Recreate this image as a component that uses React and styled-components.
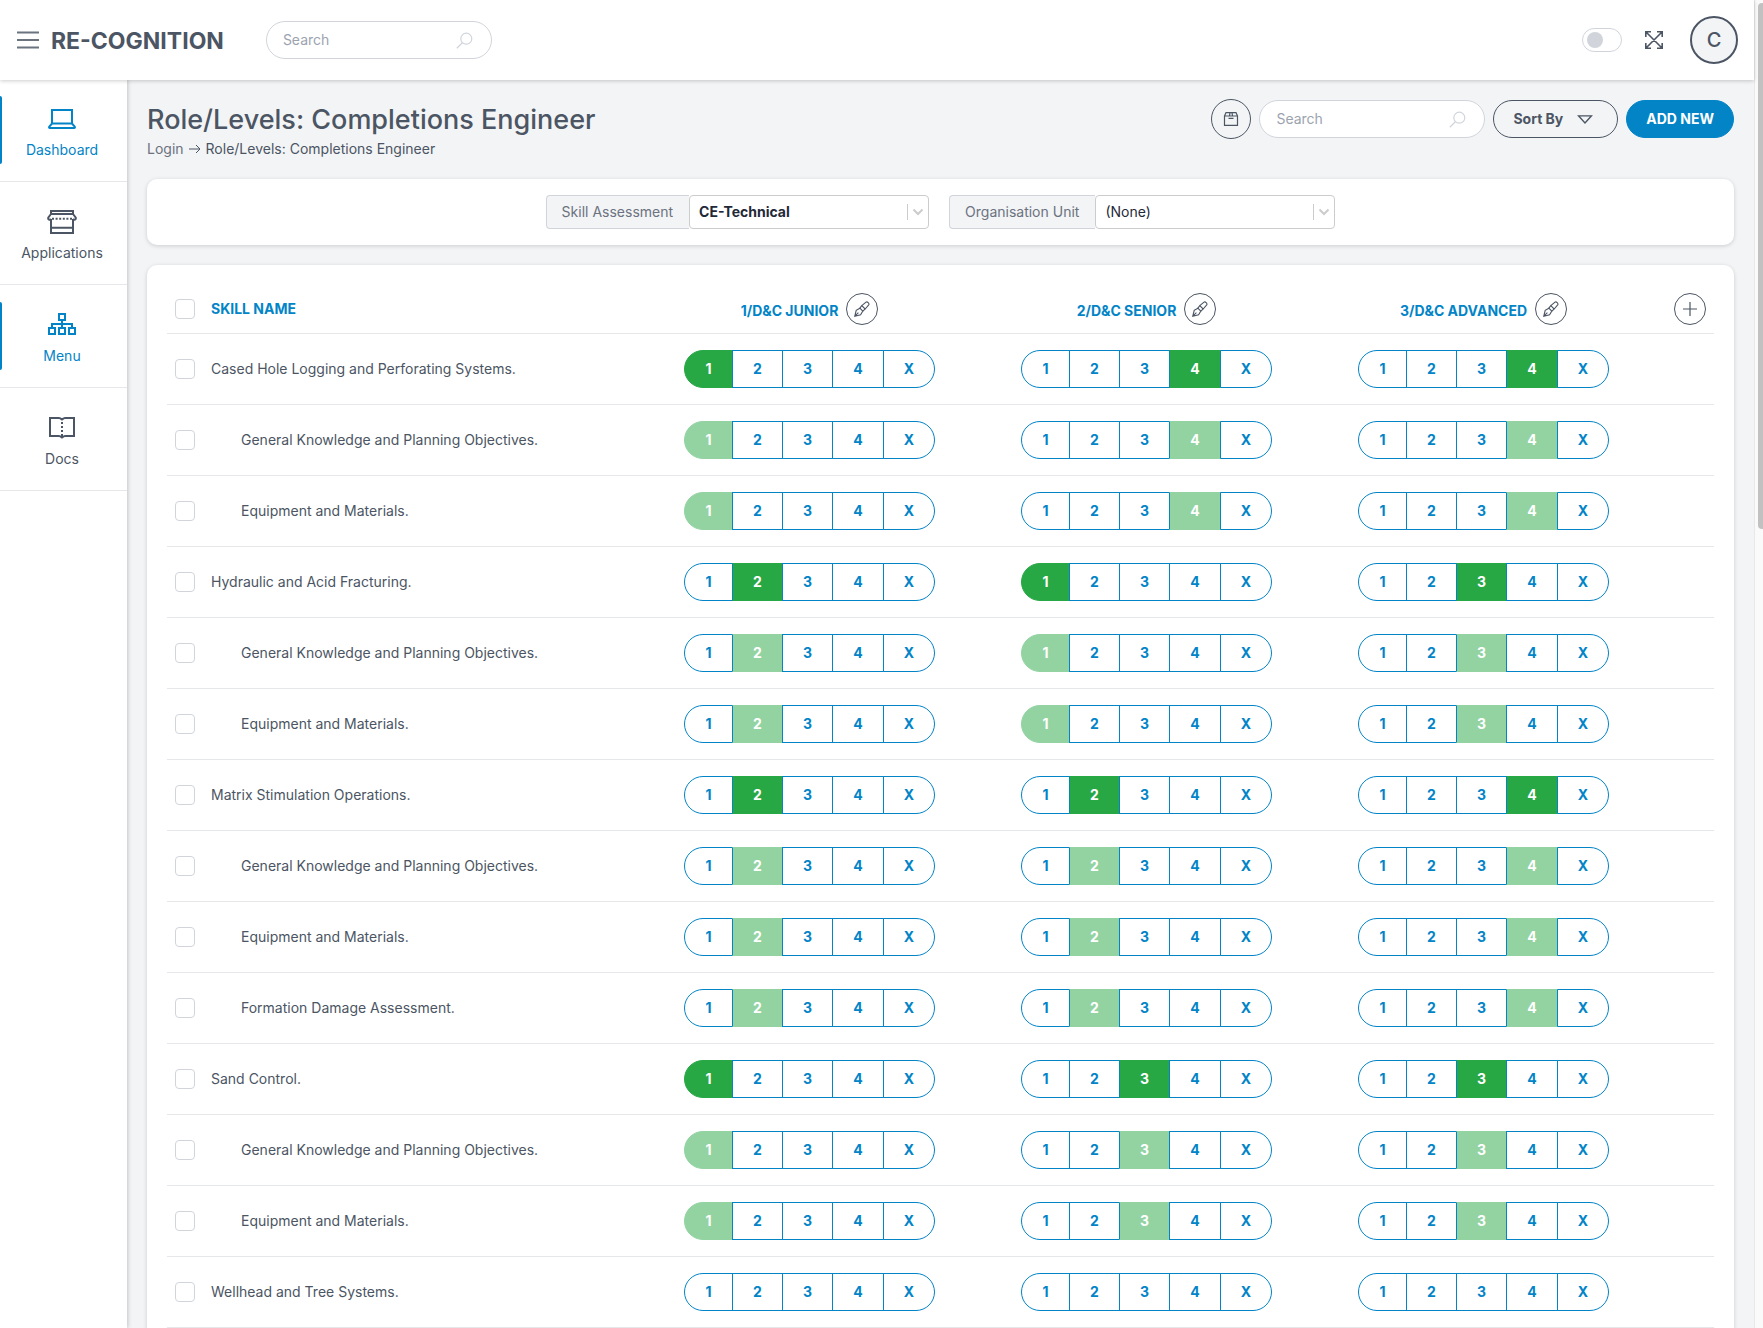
import React, { useState } from "react";
import styled, { createGlobalStyle, css } from "styled-components";

const color = {
  primary: "#0284c7",
  text: "#4b5563",
  muted: "#6b7280",
  line: "#e5e7eb",
  border: "#d1d5db",
  surface: "#f3f4f6",
  green: "#28a745",
  greenSoft: "#93d3a2",
};

const GlobalStyle = createGlobalStyle`
  *, *::before, *::after { box-sizing: border-box; }
  body {
    margin: 0;
    background: ${color.surface};
    color: ${color.text};
    font: 400 14px/20px Inter, "Liberation Sans", sans-serif;
  }
  button, input, select { font: inherit; color: inherit; margin: 0; }
  button { cursor: pointer; }
`;

const Shell = styled.div`
  display: flex;
  height: 100vh;
`;

const Frame = styled.div`
  flex: 1;
  min-width: 0;
  display: flex;
  flex-direction: column;
`;

const Rail = styled.div`
  flex: none;
  width: 9px;
  padding: 3px 0 0 3px;
  border-left: 1px solid #e8e8e8;
  background: #fafafa;
`;

const Thumb = styled.div`
  height: calc(40% - 4px);
  border-radius: 4px 0 0 4px;
  background: #c1c1c1;
`;

const TopBar = styled.header`
  flex: none;
  z-index: 2;
  display: flex;
  align-items: center;
  height: 80px;
  padding: 0 16px;
  background: #fff;
  box-shadow: 0 1px 4px rgba(0, 0, 0, 0.2);
`;

const PlainButton = styled.button`
  display: flex;
  padding: 0;
  border: 0;
  background: none;
  color: ${(p) => (p.$muted ? color.muted : color.text)};
`;

const Brand = styled.a`
  margin: 2px 42px 0 11px;
  color: ${color.text};
  font-size: 23px;
  line-height: 32px;
  font-weight: 700;
  text-decoration: none;
`;

const SearchBox = styled.label`
  display: flex;
  align-items: center;
  width: 226px;
  height: 38px;
  padding: 0 18px 0 16px;
  border: 1px solid ${color.border};
  border-radius: 19px;
  background: #fff;
  color: ${color.border};
`;

const SearchInput = styled.input`
  flex: 1;
  min-width: 0;
  padding: 0;
  border: 0;
  outline: 0;
  background: none;
  color: ${color.text};
  &::placeholder { color: #9ca3af; opacity: 1; }
`;

const TopActions = styled.div`
  display: flex;
  align-items: center;
  gap: 23px;
  margin-left: auto;
`;

const Toggle = styled.input`
  appearance: none;
  width: 40px;
  height: 24px;
  padding: 3px 4px;
  border: 1px solid ${color.border};
  border-radius: 12px;
  background: #fff;
  &::before {
    content: "";
    display: block;
    width: 16px;
    height: 16px;
    border-radius: 50%;
    background: ${color.border};
  }
  &:checked::before { margin-left: auto; background: ${color.primary}; }
`;

const Avatar = styled.button`
  width: 48px;
  height: 48px;
  margin-left: 4px;
  padding: 0;
  border: 2px solid ${color.text};
  border-radius: 50%;
  background: ${color.surface};
  font-size: 20px;
  font-weight: 500;
`;

const Body = styled.div`
  flex: 1;
  min-height: 0;
  display: flex;
`;

const Sidebar = styled.nav`
  flex: none;
  z-index: 1;
  width: 127px;
  margin-top: -1px;
  background: #fff;
  box-shadow: 1px 0 4px rgba(0, 0, 0, 0.2);
`;

const NavItem = styled.a`
  position: relative;
  display: flex;
  flex-direction: column;
  align-items: center;
  gap: 5px;
  height: 103px;
  padding: 24px 3px 0 0;
  border-bottom: 1px solid ${color.line};
  color: ${(p) => (p.$active ? color.primary : color.text)};
  text-decoration: none;
  ${(p) =>
    p.$active &&
    css`
      &::before {
        content: "";
        position: absolute;
        left: 0;
        top: 17px;
        width: 2px;
        height: 68px;
        border-radius: 0 4px 4px 0;
        background: ${color.primary};
      }
    `}
`;

const Main = styled.main`
  flex: 1;
  min-width: 0;
  padding: 19px 20px 0;
  overflow-y: auto;
  scrollbar-width: none;
`;

const PageHead = styled.div`
  display: flex;
  align-items: flex-start;
  justify-content: space-between;
  height: 80px;
`;

const Title = styled.h1`
  margin: 3px 0 1px;
  font-size: 27px;
  line-height: 36px;
  font-weight: 500;
`;

const Crumbs = styled.nav`
  display: flex;
  align-items: center;
  gap: 5px;
`;

const Crumb = styled.a`
  color: ${(p) => (p.$current ? color.text : color.muted)};
  text-decoration: none;
`;

const PageActions = styled.div`
  display: flex;
  align-items: center;
  gap: 8px;
`;

const RoundButton = styled.button`
  display: inline-flex;
  align-items: center;
  justify-content: center;
  width: ${(p) => p.$size}px;
  height: ${(p) => p.$size}px;
  padding: 0;
  border: 1px solid ${color.text};
  border-radius: 50%;
  background: none;
`;

const PillButton = styled.button`
  display: flex;
  align-items: center;
  gap: 14px;
  height: 38px;
  padding: ${(p) => (p.$primary ? "0 19px" : "0 24px 0 19px")};
  border: 1px solid ${(p) => (p.$primary ? color.primary : color.text)};
  border-radius: 19px;
  background: ${(p) => (p.$primary ? color.primary : "transparent")};
  color: ${(p) => (p.$primary ? "#fff" : color.text)};
  font-weight: 700;
`;

const Card = styled.section`
  border-radius: 10px;
  background: #fff;
  box-shadow: 0 1px 4px rgba(0, 0, 0, 0.16);
`;

const Filters = styled(Card)`
  display: flex;
  justify-content: center;
  gap: 20px;
  margin-bottom: 20px;
  padding: 16px;
`;

const Field = styled.div`
  display: flex;
  height: 34px;
`;

const FieldLabel = styled.label`
  display: flex;
  align-items: center;
  padding: 0 16px 0 15px;
  border: 1px solid ${color.border};
  border-right: 0;
  border-radius: 4px 0 0 4px;
  background: ${color.surface};
  color: ${color.muted};
`;

const SelectWrap = styled.div`
  position: relative;
  width: 240px;
`;

const Select = styled.select`
  appearance: none;
  width: 100%;
  height: 34px;
  padding: 0 28px 0 9px;
  border: 1px solid #cccccc;
  border-radius: 4px;
  background: #fff;
  color: #1f2937;
  font-weight: ${(p) => (p.$bold ? 700 : 400)};
`;

const SelectMark = styled.span`
  position: absolute;
  top: 9px;
  right: 5px;
  display: flex;
  align-items: center;
  height: 16px;
  padding-left: 4px;
  border-left: 1px solid #cccccc;
  color: #cccccc;
  pointer-events: none;
`;

const TableCard = styled(Card)`
  padding: 20px;
`;

const Table = styled.table`
  width: 100%;
  table-layout: fixed;
  border-collapse: separate;
  border-spacing: 0;
`;

const Col = styled.col`
  width: ${(p) => (p.$width ? `${p.$width}px` : "auto")};
`;

const HeadCell = styled.th`
  height: 49px;
  padding: ${(p) => (p.$end ? "0 8px 0 0" : "0")};
  border-bottom: 1px solid ${color.line};
  color: ${color.primary};
  font-weight: 700;
  text-align: ${(p) => (p.$end ? "right" : "left")};
  vertical-align: top;
  button { color: ${color.text}; }
`;

const HeadInner = styled.div`
  display: flex;
  align-items: center;
  justify-content: ${(p) => p.$align || "flex-start"};
  gap: 8px;
  height: 32px;
  margin-top: 8px;
`;

const LevelName = styled.span`
  padding-top: 4px;
`;

const Cell = styled.td`
  height: 71px;
  padding: 0 0 0 ${(p) => (p.$indent ? 30 : 0)}px;
  border-bottom: 1px solid ${color.line};
  vertical-align: middle;
`;

const Check = styled.input`
  appearance: none;
  display: block;
  width: 20px;
  height: 20px;
  margin: 0 0 0 8px;
  border: 1px solid ${color.border};
  border-radius: 4px;
  background: #fff;
  &:checked { background: ${color.primary}; border-color: ${color.primary}; }
`;

const Levels = styled.div`
  display: grid;
  grid-template-columns: 49px 50px 50px 51px 51px;
  width: 251px;
  margin: 0 auto;
`;

const Level = styled.button`
  height: 38px;
  padding: 0;
  margin-left: ${(p) => (p.$first ? 0 : -1)}px;
  border: 1px solid ${color.primary};
  border-radius: ${(p) => (p.$first ? "19px 0 0 19px" : p.$last ? "0 19px 19px 0" : "0")};
  background: #fff;
  color: ${color.primary};
  font-weight: 700;
  ${(p) =>
    p.$fill &&
    css`
      border-color: ${p.$fill};
      border-left-color: ${p.$first ? p.$fill : color.primary};
      background: ${p.$fill};
      color: #fff;
    `}
`;

const Svg = ({ w, h = w, sw = 1, children }) => (
  <svg
    width={w}
    height={h}
    viewBox={`0 0 ${w} ${h}`}
    fill="none"
    stroke="currentColor"
    strokeWidth={sw}
    aria-hidden="true"
  >
    {children}
  </svg>
);

const MenuIcon = () => (
  <Svg w={24} h={18} sw={1.8}>
    <path d="M1 1.500h22M1 9h22M1 16.500h22" />
  </Svg>
);
const SearchIcon = () => (
  <Svg w={17} sw={1.2}>
    <circle cx="10.3" cy="6.7" r="5.5" />
    <path d="M6.3 10.8L.8 16.2" />
  </Svg>
);
const ExpandIcon = () => (
  <Svg w={18} sw={1.6}>
    <path d="M.8 6V.8H6M12 .8h5.200V6M17.200 12v5.200H12M6 17.200H.8V12M.8.8l16.400 16.400M17.200.8L.8 17.200" />
  </Svg>
);
const BoxIcon = () => (
  <Svg w={16} sw={1.2}>
    <path d="M1.500 5v9.400h13V5zM1.500 5L3 1.600h10L14.500 5M6.500 5l.5-3.400M9.500 5L9 1.600M5.500 7.400h5" />
  </Svg>
);
const TriangleIcon = () => (
  <Svg w={16} h={9} sw={1.3}>
    <path d="M1.500.8h13L8 8z" />
  </Svg>
);
const ChevronIcon = () => (
  <Svg w={12} h={8} sw={2}>
    <path d="M1.500 1.500L6 6l4.500-4.500" />
  </Svg>
);
const ArrowIcon = () => (
  <Svg w={12} h={10}>
    <path d="M0 5h11M7 1l4 4-4 4" />
  </Svg>
);
const PenIcon = () => (
  <Svg w={16} sw={1.1}>
    <path d="M.8 15.200L2.200 9.400 5.900 7.200l2.900 2.900-2.200 3.700zM.8 15.200l3.600-3.600" />
    <path d="M5.900 7.200l1.900-2.500 3.400 3.300-2.400 2.100M7.800 4.700l4.200-3.500c1.200-1 3.700 1.400 2.700 2.700L11.200 8" />
  </Svg>
);
const PlusIcon = () => (
  <Svg w={14} sw={1.2}>
    <path d="M7 0v14M0 7h14" />
  </Svg>
);
const LaptopIcon = () => (
  <Svg w={32} sw={2}>
    <path d="M6 20V7h20v13" />
    <path d="M6 20.500h20l2.700 3.200c.6.700.2 1.300-.6 1.300H3.900c-.8 0-1.200-.6-.6-1.300z" />
  </Svg>
);
const StoreIcon = () => (
  <Svg w={32} sw={2}>
    <path d="M5 13v14h22V13M5 21.800h22M5 8V5h22v3M5 8h22" />
    <path d="M5 8l-2.800 3.600c-.6 1.900 1.600 2.700 2.800 1.400M27 8l2.800 3.600c.6 1.900-1.600 2.700-2.800 1.400" sw="1.500" />
    <path d="M6 12.800h20" strokeDasharray="2 1.600" />
  </Svg>
);
const TreeIcon = () => (
  <Svg w={32} sw={2}>
    <path d="M13 5h6v6h-6zM3 19h6v6H3zM13 19h6v6h-6zM23 19h6v6h-6zM16 11v8M6 19v-4h20v4" />
  </Svg>
);
const BookIcon = () => (
  <Svg w={32} sw={2}>
    <path d="M16 7.500c-1-.8-1.800-1.500-3-1.500H4v18h9c1.200 0 2 .7 3 1.500 1-.8 1.800-1.500 3-1.500h9V6h-9c-1.200 0-2 .7-3 1.500z" />
    <path d="M16 10v14" strokeDasharray="2 2" />
  </Svg>
);

const NAV = [
  ["Dashboard", LaptopIcon, true],
  ["Applications", StoreIcon, false],
  ["Menu", TreeIcon, true],
  ["Docs", BookIcon, false],
];

const COLUMNS = ["1/D&C JUNIOR", "2/D&C SENIOR", "3/D&C ADVANCED"];
const MARKS = ["1", "2", "3", "4", "X"];
const GENERAL = "General Knowledge and Planning Objectives.";
const EQUIPMENT = "Equipment and Materials.";

const SKILLS = [
  { name: "Cased Hole Logging and Perforating Systems.", levels: "144", children: [GENERAL, EQUIPMENT] },
  { name: "Hydraulic and Acid Fracturing.", levels: "213", children: [GENERAL, EQUIPMENT] },
  { name: "Matrix Stimulation Operations.", levels: "224", children: [GENERAL, EQUIPMENT, "Formation Damage Assessment."] },
  { name: "Sand Control.", levels: "133", children: [GENERAL, EQUIPMENT] },
  { name: "Wellhead and Tree Systems.", levels: "   ", children: [] },
];

const ROWS = SKILLS.flatMap((s) => [
  { name: s.name, levels: s.levels, child: false },
  ...s.children.map((name) => ({ name, levels: s.levels, child: true })),
]);

function Search({ label }) {
  return (
    <SearchBox>
      <SearchInput type="text" placeholder="Search" aria-label={label} />
      <SearchIcon />
    </SearchBox>
  );
}

function SelectField({ id, label, options, bold }) {
  return (
    <Field>
      <FieldLabel htmlFor={id}>{label}</FieldLabel>
      <SelectWrap>
        <Select id={id} $bold={bold}>
          {options.map((o) => (
            <option key={o}>{o}</option>
          ))}
        </Select>
        <SelectMark>
          <ChevronIcon />
        </SelectMark>
      </SelectWrap>
    </Field>
  );
}

function LevelPicker({ initial, soft, label }) {
  const [value, setValue] = useState(initial);
  return (
    <Levels role="group" aria-label={label}>
      {MARKS.map((m, i) => (
        <Level
          key={m}
          type="button"
          $first={i === 0}
          $last={i === MARKS.length - 1}
          $fill={m === value ? (soft ? color.greenSoft : color.green) : null}
          aria-pressed={m === value}
          onClick={() => setValue(m)}
        >
          {m}
        </Level>
      ))}
    </Levels>
  );
}

export default function App() {
  return (
    <Shell>
      <GlobalStyle />
      <Frame>
        <TopBar>
          <PlainButton type="button" $muted aria-label="Toggle menu">
            <MenuIcon />
          </PlainButton>
          <Brand href="#">RE-COGNITION</Brand>
          <Search label="Search site" />
          <TopActions>
            <Toggle type="checkbox" role="switch" aria-label="Dark mode" />
            <PlainButton type="button" aria-label="Full screen">
              <ExpandIcon />
            </PlainButton>
            <Avatar type="button">C</Avatar>
          </TopActions>
        </TopBar>
        <Body>
          <Sidebar>
            {NAV.map(([label, Icon, active]) => (
              <NavItem key={label} href="#" $active={active}>
                <Icon />
                {label}
              </NavItem>
            ))}
          </Sidebar>
          <Main>
            <PageHead>
              <div>
                <Title>Role/Levels: Completions Engineer</Title>
                <Crumbs aria-label="Breadcrumb">
                  <Crumb href="#">Login</Crumb>
                  <ArrowIcon />
                  <Crumb href="#" $current>
                    Role/Levels: Completions Engineer
                  </Crumb>
                </Crumbs>
              </div>
              <PageActions>
                <RoundButton type="button" $size={40} aria-label="Archive">
                  <BoxIcon />
                </RoundButton>
                <Search label="Search skills" />
                <PillButton type="button">
                  Sort By
                  <TriangleIcon />
                </PillButton>
                <PillButton type="button" $primary>
                  ADD NEW
                </PillButton>
              </PageActions>
            </PageHead>
            <Filters>
              <SelectField id="assessment" label="Skill Assessment" options={["CE-Technical"]} bold />
              <SelectField id="unit" label="Organisation Unit" options={["(None)"]} />
            </Filters>
            <TableCard>
              <Table>
                <colgroup>
                  <Col $width={44} />
                  <Col $width={430} />
                  <Col />
                  <Col />
                  <Col />
                  <Col $width={62} />
                </colgroup>
                <thead>
                  <tr>
                    <HeadCell>
                      <HeadInner>
                        <Check type="checkbox" aria-label="Select all skills" />
                      </HeadInner>
                    </HeadCell>
                    <HeadCell>
                      <HeadInner>SKILL NAME</HeadInner>
                    </HeadCell>
                    {COLUMNS.map((c) => (
                      <HeadCell key={c}>
                        <HeadInner $align="center">
                          <LevelName>{c}</LevelName>
                          <RoundButton type="button" $size={32} aria-label={`Edit ${c}`}>
                            <PenIcon />
                          </RoundButton>
                        </HeadInner>
                      </HeadCell>
                    ))}
                    <HeadCell $end>
                      <HeadInner $align="flex-end">
                        <RoundButton type="button" $size={32} aria-label="Add level">
                          <PlusIcon />
                        </RoundButton>
                      </HeadInner>
                    </HeadCell>
                  </tr>
                </thead>
                <tbody>
                  {ROWS.map((row, r) => (
                    <tr key={r}>
                      <Cell>
                        <Check type="checkbox" id={`skill-${r}`} />
                      </Cell>
                      <Cell $indent={row.child}>
                        <label htmlFor={`skill-${r}`}>{row.name}</label>
                      </Cell>
                      {COLUMNS.map((c, i) => (
                        <Cell key={c}>
                          <LevelPicker initial={row.levels[i]} soft={row.child} label={`${row.name} ${c}`} />
                        </Cell>
                      ))}
                      <Cell />
                    </tr>
                  ))}
                </tbody>
              </Table>
            </TableCard>
          </Main>
        </Body>
      </Frame>
      <Rail aria-hidden="true">
        <Thumb />
      </Rail>
    </Shell>
  );
}
